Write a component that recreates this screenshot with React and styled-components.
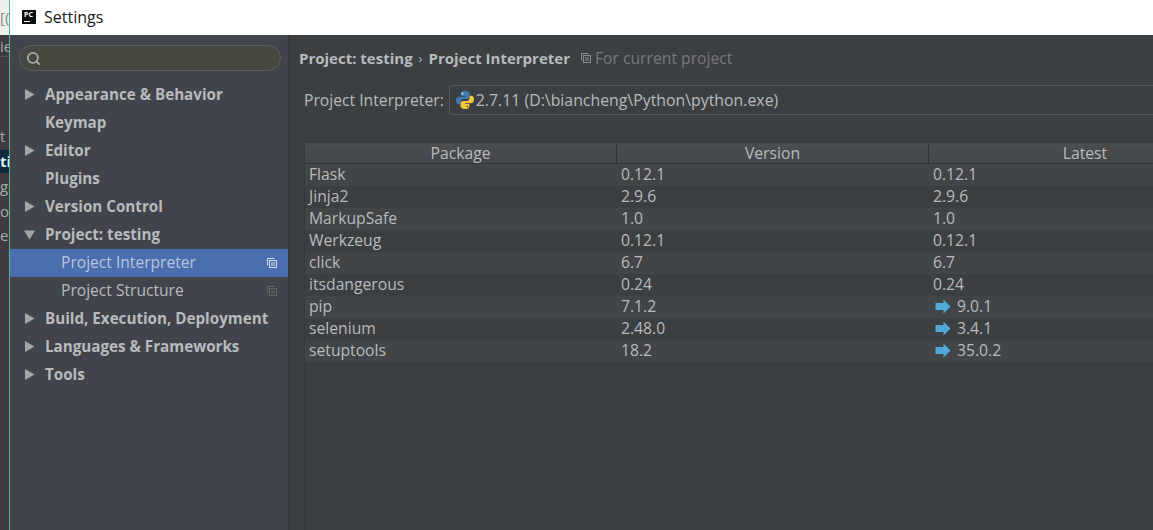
import styled, { createGlobalStyle } from "styled-components";
import { Search } from "lucide-react";

const packages = [
  { name: "Flask", version: "0.12.1", latest: "0.12.1" },
  { name: "Jinja2", version: "2.9.6", latest: "2.9.6" },
  { name: "MarkupSafe", version: "1.0", latest: "1.0" },
  { name: "Werkzeug", version: "0.12.1", latest: "0.12.1" },
  { name: "click", version: "6.7", latest: "6.7" },
  { name: "itsdangerous", version: "0.24", latest: "0.24" },
  { name: "pip", version: "7.1.2", latest: "9.0.1", upgrade: true },
  { name: "selenium", version: "2.48.0", latest: "3.4.1", upgrade: true },
  { name: "setuptools", version: "18.2", latest: "35.0.2", upgrade: true },
];

const navItems = [
  { label: "Appearance & Behavior", arrow: "right" },
  { label: "Keymap" },
  { label: "Editor", arrow: "right" },
  { label: "Plugins" },
  { label: "Version Control", arrow: "right" },
  { label: "Project: testing", arrow: "down" },
  { label: "Project Interpreter", child: true, selected: true },
  { label: "Project Structure", child: true },
  { label: "Build, Execution, Deployment", arrow: "right" },
  { label: "Languages & Frameworks", arrow: "right" },
  { label: "Tools", arrow: "right" },
];

const stripRows = [
  { text: "[(", height: 35, light: true },
  { text: "ie", height: 22, top: true },
  { text: "", height: 66 },
  { text: "t", height: 27 },
  { text: "ti", height: 23, active: true },
  { text: "ge", height: 26 },
  { text: "or", height: 24 },
  { text: "e", height: 25 },
];

function ProjectIcon({ color }) {
  return (
    <svg width="12" height="12" viewBox="0 0 12 12" fill="none" stroke={color}>
      <path d="M1.5 8.5V1.5H8.5" />
      <rect x="3.5" y="3.5" width="7" height="7" />
      <path d="M5 6H9M5 8H9" />
    </svg>
  );
}

function PythonIcon() {
  return (
    <svg width="20" height="20" viewBox="0 0 20 20">
      <path
        fill="#3f7cb3"
        d="M9.8 1C6.4 1 5.6 2.3 5.6 3.7V6H10v.8H3.8C2.2 6.8 1 8.2 1 10.4c0 2.300 1.200 3.800 2.800 3.800h1.700v-2.400c0-1.500 1.300-2.800 2.900-2.800h3.800c1.300 0 2.300-1.100 2.300-2.400V3.700C14.500 2.200 13 1 9.800 1z"
      />
      <circle cx="7.500" cy="3.500" r="0.900" fill="#d8e4ee" />
      <path
        fill="#f2c93a"
        d="M10.200 19c3.400 0 4.200-1.300 4.200-2.700V14H10v-.8h6.200c1.600 0 2.800-1.400 2.800-3.600 0-2.300-1.200-3.800-2.800-3.800h-1.700v2.400c0 1.500-1.300 2.800-2.900 2.800H7.800c-1.300 0-2.300 1.100-2.300 2.400v2.900C5.500 17.800 7 19 10.200 19z"
      />
      <circle cx="12.500" cy="16.500" r="0.900" fill="#6b5a20" />
    </svg>
  );
}

function UpgradeArrow() {
  return (
    <svg width="16" height="15" viewBox="0 0 16 15">
      <path fill="#52a9d8" d="M0.500 4H8.500V0.500L15.500 7.500 8.500 14.500V11H0.500z" />
    </svg>
  );
}

function TreeArrow({ direction }) {
  return (
    <svg width="11" height="11" viewBox="0 0 11 11">
      <path fill="#a3a6a9" d={direction === "down" ? "M0 1.500H11L5.500 10.500z" : "M1 0L10.500 5.500 1 11z"} />
    </svg>
  );
}

export default function App() {
  return (
    <>
      <GlobalStyle />
      <Page>
        <BackgroundStrip>
          {stripRows.map((row, i) => (
            <StripRow key={i} $height={row.height} $light={row.light} $active={row.active} $top={row.top}>
              {row.text}
            </StripRow>
          ))}
        </BackgroundStrip>
        <Window>
          <TitleBar>
            <AppLogo>
              PC
              <LogoBar />
            </AppLogo>
            <WindowTitle>Settings</WindowTitle>
          </TitleBar>
          <Body>
            <Sidebar>
              <SearchBox>
                <Search size={15} strokeWidth={3} color="#a8adaa" />
              </SearchBox>
              <NavList>
                {navItems.map((item) => (
                  <NavRow key={item.label} $selected={item.selected} $child={item.child}>
                    <ArrowSlot>{item.arrow && <TreeArrow direction={item.arrow} />}</ArrowSlot>
                    <NavLabel $child={item.child} $selected={item.selected}>{item.label}</NavLabel>
                    {item.child && (
                      <NavIcon>
                        <ProjectIcon color={item.selected ? "#d5deee" : "#63676a"} />
                      </NavIcon>
                    )}
                  </NavRow>
                ))}
              </NavList>
            </Sidebar>
            <Content>
              <Breadcrumbs>
                <Crumb>Project: testing</Crumb>
                <CrumbSep>›</CrumbSep>
                <Crumb>Project Interpreter</Crumb>
                <ScopeIcon>
                  <ProjectIcon color="#8b8e90" />
                </ScopeIcon>
                <Scope>For current project</Scope>
              </Breadcrumbs>
              <InterpreterRow>
                <InterpreterLabel>Project Interpreter:</InterpreterLabel>
                <InterpreterSelect>
                  <PythonIcon />
                  <span>2.7.11 (D:\biancheng\Python\python.exe)</span>
                </InterpreterSelect>
              </InterpreterRow>
              <Table>
                <HeaderRow>
                  <HeaderCell>Package</HeaderCell>
                  <HeaderCell>Version</HeaderCell>
                  <HeaderCell>Latest</HeaderCell>
                </HeaderRow>
                {packages.map((pkg, i) => (
                  <Row key={pkg.name} $odd={i % 2 === 1}>
                    <Cell>{pkg.name}</Cell>
                    <Cell>{pkg.version}</Cell>
                    <Cell $upgrade={pkg.upgrade}>
                      {pkg.upgrade && <UpgradeArrow />}
                      {pkg.latest}
                    </Cell>
                  </Row>
                ))}
              </Table>
            </Content>
          </Body>
        </Window>
      </Page>
    </>
  );
}

const GlobalStyle = createGlobalStyle`
  html, body {
    margin: 0;
    padding: 0;
    background: #3c3f41;
    overflow: hidden;
  }
`;

const Page = styled.div`
  display: flex;
  width: 1153px;
  height: 530px;
  overflow: hidden;
  font-family: "Open Sans", "Noto Sans", sans-serif;
`;

const BackgroundStrip = styled.div`
  width: 9px;
  flex: none;
  display: flex;
  flex-direction: column;
  background: #3f3b40;
  overflow: hidden;
`;

const StripRow = styled.div`
  flex: none;
  height: ${(p) => p.$height}px;
  line-height: ${(p) => p.$height}px;
  font-size: 15px;
  font-weight: ${(p) => (p.$active ? 700 : 400)};
  white-space: nowrap;
  color: ${(p) => (p.$light ? "#8b8b8b" : p.$active ? "#e8eef0" : "#a9a9a9")};
  background: ${(p) => (p.$light ? "#eef0ee" : p.$active ? "#10293c" : "transparent")};
  border-bottom: ${(p) => (p.$top ? "1px solid #55565a" : "none")};
  box-sizing: border-box;
`;

const Window = styled.div`
  flex: 1;
  min-width: 0;
  display: flex;
  flex-direction: column;
  border-left: 1px solid #4fb88d;
`;

const TitleBar = styled.div`
  height: 35px;
  box-sizing: border-box;
  flex: none;
  display: flex;
  align-items: center;
  padding: 0 0 2px 12px;
  gap: 8px;
  background: #ffffff;
`;

const AppLogo = styled.div`
  position: relative;
  width: 14px;
  height: 14px;
  background: #0c0c0c;
  color: #fff;
  font-size: 7px;
  font-weight: 700;
  line-height: 9px;
  text-indent: 2px;
  overflow: hidden;
`;

const LogoBar = styled.div`
  position: absolute;
  left: 2px;
  bottom: 2px;
  width: 6px;
  height: 1px;
  background: #fff;
`;

const WindowTitle = styled.div`
  font-size: 16px;
  color: #1a1a1a;
`;

const Body = styled.div`
  flex: 1;
  display: flex;
  min-height: 0;
`;

const Sidebar = styled.div`
  width: 278px;
  flex: none;
  display: flex;
  flex-direction: column;
  background: #41444b;
  border-right: 2px solid #37393b;
`;

const SearchBox = styled.div`
  box-sizing: border-box;
  height: 26px;
  margin: 10px 7px 0 9px;
  padding-left: 6px;
  display: flex;
  align-items: center;
  background: #45483f;
  border: 1px solid #5a5d5c;
  border-radius: 13px;
`;

const NavList = styled.div`
  display: flex;
  flex-direction: column;
  margin-top: 10px;
`;

const NavRow = styled.div`
  height: 28px;
  display: flex;
  align-items: center;
  background: ${(p) => (p.$selected ? "#4b6eaf" : "transparent")};
  padding-right: 10px;
`;

const ArrowSlot = styled.div`
  width: 35px;
  flex: none;
  display: flex;
  justify-content: flex-end;
  padding-right: 10px;
  margin-bottom: 2px;
  box-sizing: border-box;
`;

const NavLabel = styled.div`
  flex: 1;
  font-size: ${(p) => (p.$child ? "15.6px" : "15.2px")};
  white-space: nowrap;
  margin-bottom: 2px;
  font-weight: ${(p) => (p.$child ? 400 : 700)};
  color: ${(p) => (p.$selected ? "#b9c5dc" : "#b8babc")};
  padding-left: ${(p) => (p.$child ? "16px" : "0")};
`;

const NavIcon = styled.div`
  display: flex;
  width: 12px;
`;

const Content = styled.div`
  flex: 1;
  min-width: 0;
  display: flex;
  flex-direction: column;
  padding-left: 14px;
  background: #3c3f41;
  overflow: hidden;
`;

const Breadcrumbs = styled.div`
  height: 46px;
  margin-left: -5px;
  display: flex;
  align-items: center;
  white-space: nowrap;
  font-size: 15px;
  color: #b8babc;
`;

const Crumb = styled.span`
  font-weight: 700;
`;

const CrumbSep = styled.span`
  margin: 0 6px;
  font-size: 13px;
`;

const ScopeIcon = styled.span`
  display: flex;
  margin: 0 3px 0 10px;
`;

const Scope = styled.span`
  font-size: 15.7px;
  color: #77797b;
`;

const InterpreterRow = styled.div`
  display: flex;
  align-items: center;
  gap: 5px;
  height: 30px;
  margin-top: 4px;
  margin-bottom: 28px;
`;

const InterpreterLabel = styled.div`
  font-size: 15.7px;
  color: #b8babc;
  white-space: nowrap;
`;

const InterpreterSelect = styled.div`
  flex: 1;
  height: 30px;
  box-sizing: border-box;
  display: flex;
  align-items: center;
  gap: 1px;
  padding-left: 5px;
  font-size: 15.85px;
  color: #b8babc;
  white-space: nowrap;
  border: 1px solid #56595b;
  border-right: none;
  border-radius: 3px 0 0 3px;
`;

const Table = styled.div`
  flex: 1;
  display: flex;
  flex-direction: column;
  border-left: 1px solid #36383a;
  width: 936px;
`;

const HeaderRow = styled.div`
  height: 21px;
  box-sizing: border-box;
  display: grid;
  grid-template-columns: 312px 312px 1fr;
  background: linear-gradient(#4b4e50, #43464a);
  border-bottom: 1px solid #323436;
`;

const HeaderCell = styled.div`
  text-align: center;
  font-size: 15.7px;
  line-height: 20px;
  color: #b8babc;
  border-right: 1px solid #2f3133;
  &:last-child {
    border-right: none;
  }
`;

const Row = styled.div`
  height: 22px;
  display: grid;
  grid-template-columns: 312px 312px 1fr;
  background: ${(p) => (p.$odd ? "#3c3f41" : "#414548")};
`;

const Cell = styled.div`
  display: flex;
  align-items: center;
  gap: 6px;
  height: 20px;
  padding-left: ${(p) => (p.$upgrade ? "6px" : "4px")};
  font-size: 15.7px;
  color: #b8babc;
  white-space: nowrap;
`;
